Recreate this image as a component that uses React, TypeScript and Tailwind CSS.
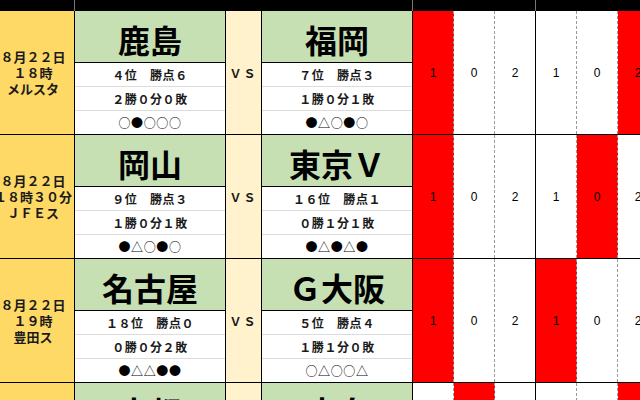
import React from 'react';

type Match = {
  date: string[];
  home: { name: string; rank: string; record: string; form: string };
  away: { name: string; rank: string; record: string; form: string };
  cells: { v: string; red: boolean }[];
};

const matches: Match[] = [
  {
    date: ['８月２２日', '１８時', 'メルスタ'],
    home: { name: '鹿島', rank: '４位　勝点６', record: '２勝０分０敗', form: '○●○○○' },
    away: { name: '福岡', rank: '７位　勝点３', record: '１勝０分１敗', form: '●△○●○' },
    cells: [
      { v: '1', red: true },
      { v: '0', red: false },
      { v: '2', red: false },
      { v: '1', red: false },
      { v: '0', red: false },
      { v: '2', red: true },
    ],
  },
  {
    date: ['８月２２日', '１８時３０分', 'ＪＦＥス'],
    home: { name: '岡山', rank: '９位　勝点３', record: '１勝０分１敗', form: '●△○●○' },
    away: { name: '東京Ｖ', rank: '１６位　勝点１', record: '０勝１分１敗', form: '●△●△●' },
    cells: [
      { v: '1', red: true },
      { v: '0', red: false },
      { v: '2', red: false },
      { v: '1', red: false },
      { v: '0', red: true },
      { v: '2', red: false },
    ],
  },
  {
    date: ['８月２２日', '１９時', '豊田ス'],
    home: { name: '名古屋', rank: '１８位　勝点０', record: '０勝０分２敗', form: '●△△●●' },
    away: { name: 'Ｇ大阪', rank: '５位　勝点４', record: '１勝１分０敗', form: '○△○○△' },
    cells: [
      { v: '1', red: true },
      { v: '0', red: false },
      { v: '2', red: false },
      { v: '1', red: true },
      { v: '0', red: false },
      { v: '2', red: false },
    ],
  },
  {
    date: ['８月２３日', '１８時', '等々力'],
    home: { name: '京都', rank: '１２位　勝点２', record: '０勝２分０敗', form: '△○●△○' },
    away: { name: '広島', rank: '３位　勝点６', record: '２勝０分０敗', form: '○○△○●' },
    cells: [
      { v: '1', red: false },
      { v: '0', red: true },
      { v: '2', red: false },
      { v: '1', red: false },
      { v: '0', red: false },
      { v: '2', red: true },
    ],
  },
];

const jp = { fontFamily: '"Noto Sans CJK JP", "Liberation Sans", sans-serif' };
const num = { fontFamily: '"Liberation Sans", Arial, sans-serif' };

function Team({ t }: { t: Match['home'] }) {
  return (
    <div className="flex w-[151px] shrink-0 flex-col border-r border-black">
      <div className="flex h-[52px] items-center justify-center border-b border-black bg-[#c6e0b4] pt-[4px] text-[32px] font-bold leading-none text-black">
        {t.name}
      </div>
      <div className="flex h-[24px] items-center justify-center border-b border-[#dcdcdc] bg-white text-[12px] font-bold tracking-[0.6px] text-[#1a1a1a]">
        {t.rank}
      </div>
      <div className="flex h-[24px] items-center justify-center border-b border-[#dcdcdc] bg-white text-[12px] font-bold tracking-[0.6px] text-[#1a1a1a]">
        {t.record}
      </div>
      <div className="flex h-[23px] items-center justify-center bg-white text-[12px] tracking-[0.6px] text-black">
        {t.form}
      </div>
    </div>
  );
}

function Row({ m }: { m: Match }) {
  return (
    <div className="flex h-[124px] shrink-0 border-b border-black">
      <div className="flex w-[75px] shrink-0 items-center overflow-hidden border-r border-black bg-[#ffd966]">
        <div className="-ml-[11px] w-[88px] shrink-0 text-center text-[13px] font-bold leading-[16px] text-[#1a1a1a]">
          {m.date.map((d) => (
            <div key={d} className="whitespace-nowrap">
              {d}
            </div>
          ))}
        </div>
      </div>
      <Team t={m.home} />
      <div className="flex w-[36px] shrink-0 items-center justify-center border-r border-black bg-[#fff2cc] text-[12px] font-bold tracking-[2px] text-[#1a1a1a]">
        ＶＳ
      </div>
      <Team t={m.away} />
      {m.cells.map((c, i) => (
        <div
          key={i}
          style={num}
          className={
            'flex w-[41px] shrink-0 items-center justify-center border-r text-[12px] text-black ' +
            (c.red ? 'bg-[#ff0000] ' : 'bg-white ') +
            (i % 3 === 2 ? 'border-black' : 'border-dashed border-[#9a9a9a]')
          }
        >
          {c.v}
        </div>
      ))}
    </div>
  );
}

export default function App() {
  return (
    <div style={jp} className="h-[400px] w-[640px] overflow-hidden bg-white">
      <div className="flex w-[900px] flex-col">
        <div className="flex h-[11px] shrink-0 bg-black">
          <div className="w-[75px] shrink-0 border-r border-[#777]" />
          <div className="w-[338px] shrink-0 border-r border-[#777]" />
          <div className="w-[123px] shrink-0 border-r border-[#777]" />
          <div className="w-[123px] shrink-0 border-r border-[#777]" />
        </div>
        {matches.map((m, i) => (
          <Row key={i} m={m} />
        ))}
      </div>
    </div>
  );
}
